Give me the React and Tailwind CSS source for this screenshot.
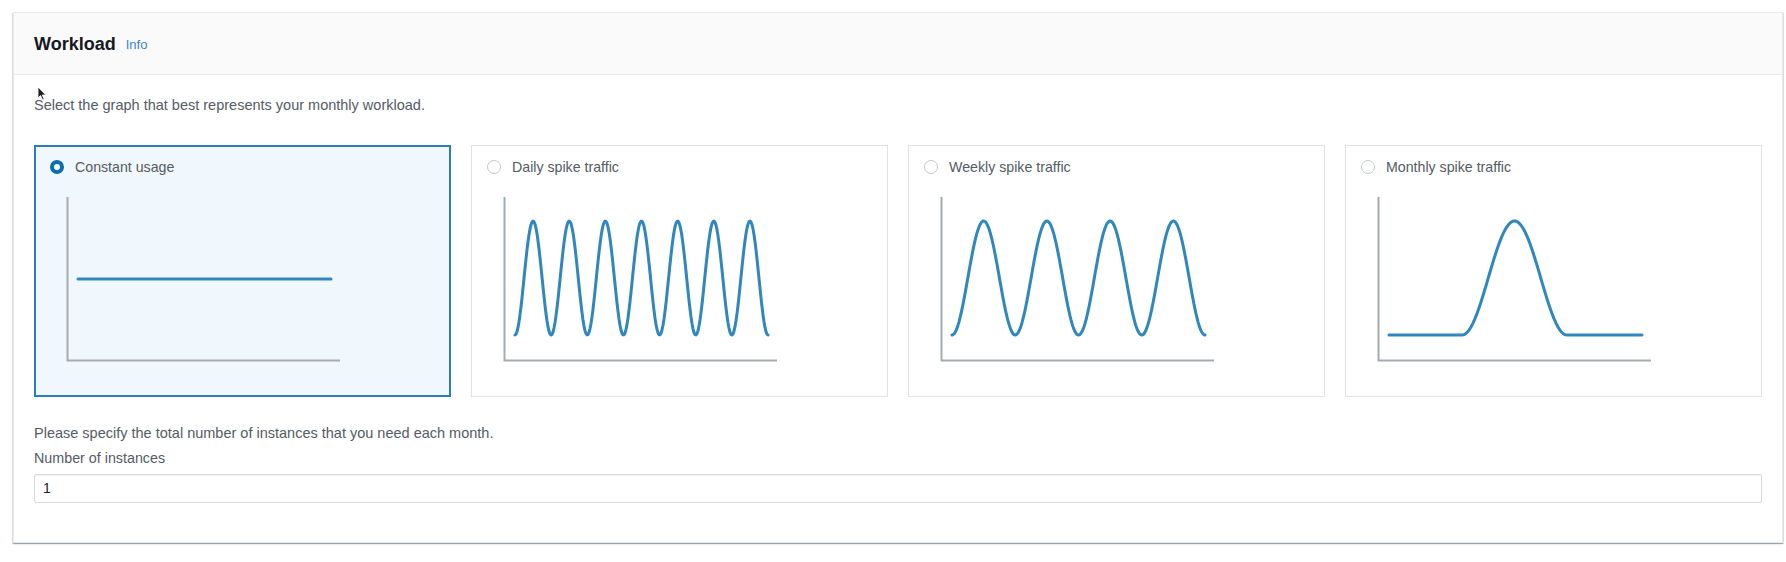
import React, { useState } from 'react';

const font = { fontFamily: '"Liberation Sans", Arial, sans-serif' };

// build the curve path for each workload graph
const wave = (periods) => {
  const x0 = 12;
  const x1 = 265;
  const p = (x1 - x0) / periods;
  const pts = [];
  for (let x = x0; x <= x1 + 0.01; x += 1) {
    const y = 82 + 57 * Math.cos((2 * Math.PI * (x - x0)) / p);
    pts.push(`${x.toFixed(1)},${y.toFixed(1)}`);
  }
  return 'M' + pts.join(' L');
};

const bump = () => {
  const pts = ['12,139', '85,139'];
  for (let x = 85; x <= 190; x += 1) {
    const y = 139 - 114 * (1 - Math.cos((2 * Math.PI * (x - 85)) / 105)) / 2;
    pts.push(`${x},${y.toFixed(1)}`);
  }
  pts.push('265,139');
  return 'M' + pts.join(' L');
};

const options = [
  { id: 'constant', label: 'Constant usage', d: 'M12,83 L265,83' },
  { id: 'daily', label: 'Daily spike traffic', d: wave(7) },
  { id: 'weekly', label: 'Weekly spike traffic', d: wave(4) },
  { id: 'monthly', label: 'Monthly spike traffic', d: bump() },
];

const Graph = ({ d }) => (
  <svg width="276" height="166" viewBox="0 0 276 166" className="ml-[16px] mt-[19px] block">
    <path d="M1.5,1 L1.5,164.5 L274,164.5" fill="none" stroke="#a5abb0" strokeWidth="2" />
    <path d={d} fill="none" stroke="#2f87bd" strokeWidth="3" strokeLinecap="round" strokeLinejoin="round" />
  </svg>
);

const Card = ({ opt, selected, onSelect }) => (
  <div
    onClick={onSelect}
    className={
      selected
        ? 'h-[252px] border border-[#2a7fb8] ring-1 ring-inset ring-[#2a7fb8] bg-[#f1f8fd] pl-[15px] pt-[11px] cursor-pointer'
        : 'h-[252px] border border-[#dfe3e6] bg-white pl-[15px] pt-[11px] cursor-pointer'
    }
  >
    <div className="flex items-center h-[20px]">
      {selected ? (
        <span className="w-[14px] h-[14px] rounded-full border-[4px] border-[#0a6fb0] bg-white" />
      ) : (
        <span className="w-[14px] h-[14px] rounded-full border border-[#c2c8cc] bg-white" />
      )}
      <span className="ml-[11px] text-[14.2px] leading-[20px] text-[#545b64]">{opt.label}</span>
    </div>
    <Graph d={opt.d} />
  </div>
);

export default function App() {
  const [choice, setChoice] = useState('constant');

  return (
    <div className="relative w-full h-[562px] bg-white pt-[12px] pl-[13px] pr-[3px]" style={font}>
      <div className="border border-[#e6e9eb] bg-white shadow-[0_1px_1px_0_rgba(0,28,36,0.25),1px_1px_1px_0_rgba(0,28,36,0.1),-1px_1px_1px_0_rgba(0,28,36,0.1)]">
        <div className="h-[62px] bg-[#fafafa] border-b border-[#eaeded] px-[20px] flex items-center">
          <h2 className="text-[18px] font-bold text-[#16191f] leading-[22px]">Workload</h2>
          <span className="ml-[10px] text-[13px] text-[#3a86c8] leading-[22px] pt-[2px]">Info</span>
        </div>

        <div className="px-[20px] pb-[39px]">
          <p className="pt-[20px] text-[14.5px] leading-[20px] text-[#545b64]">
            Select the graph that best represents your monthly workload.
          </p>

          <div className="mt-[30px] grid grid-cols-4 gap-[20px]">
            {options.map((o) => (
              <Card key={o.id} opt={o} selected={choice === o.id} onSelect={() => setChoice(o.id)} />
            ))}
          </div>

          <p className="mt-[26px] text-[14.5px] leading-[20px] text-[#545b64]">
            Please specify the total number of instances that you need each month.
          </p>
          <label className="block mt-[5px] text-[14.3px] leading-[20px] text-[#545b64]">Number of instances</label>
          <div className="mt-[6px] h-[29px] border border-[#d5dbdb] rounded-[2px] shadow-[inset_0_1px_1px_rgba(0,0,0,0.04)] flex items-center px-[8px] text-[14px] text-[#16191f]">
            1
          </div>
        </div>
      </div>

      {/* mouse pointer left in the capture */}
      <svg className="absolute left-[37px] top-[86px]" width="10" height="15" viewBox="0 0 10 15">
        <path d="M1,1 L1,12 L3.6,9.6 L5.6,14 L7.2,13.2 L5.3,9 L8.8,9 Z" fill="#222" stroke="#fff" strokeWidth="0.8" />
      </svg>
    </div>
  );
}
